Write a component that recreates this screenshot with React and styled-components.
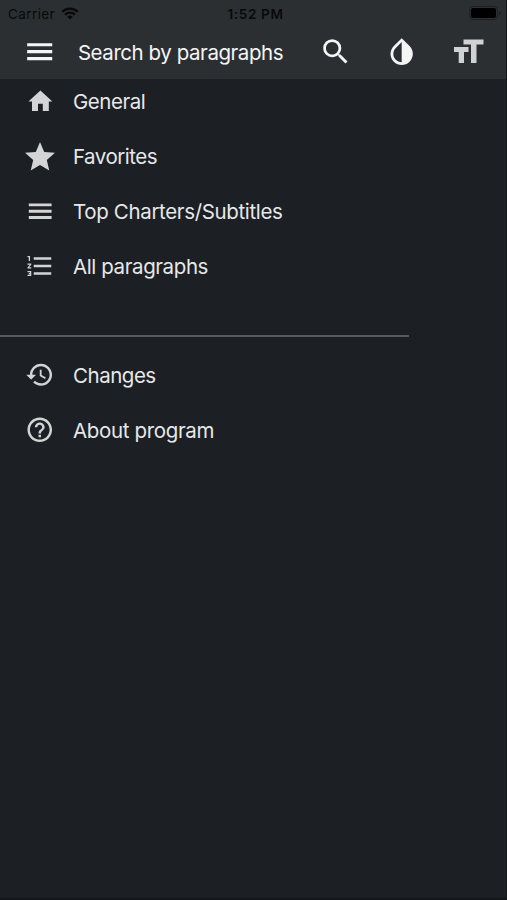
import React from 'react';
import styled, { createGlobalStyle } from 'styled-components';

const GlobalStyle = createGlobalStyle`
  * { box-sizing: border-box; }
  body { margin: 0; background: #1c1f23; }
`;

const Screen = styled.div`
  display: flex;
  flex-direction: column;
  width: 507px;
  height: 900px;
  overflow: hidden;
  background: #1c1f23;
  border-right: 1px solid #14171a;
  border-bottom: 2px solid #14171a;
  font-family: Inter, 'Liberation Sans', sans-serif;
  color: #e6e8ea;
`;

const Header = styled.header`
  height: 79px;
  flex: none;
  margin-right: -1px;
  background: #2c2f32;
`;

const StatusBar = styled.div`
  display: grid;
  grid-template-columns: 1fr auto 1fr;
  align-items: center;
  height: 27px;
  padding: 0 5px 0 8px;
  color: #08090a;
  font-size: 13.5px;
`;

const Carrier = styled.div`
  display: flex;
  align-items: center;
  gap: 6px;
  letter-spacing: 0.4px;
`;

const Clock = styled.div`
  font-weight: 600;
  letter-spacing: 0.65px;
  margin-left: 1px;
`;

const Battery = styled.svg`
  display: block;
  justify-self: end;
`;

const Toolbar = styled.div`
  display: flex;
  align-items: center;
  height: 52px;
  padding: 0 20px 2px 23px;
  color: #f4f5f5;
`;

const Title = styled.h1`
  flex: 1;
  margin: 0 0 0 21.5px;
  padding-top: 1px;
  font-size: 20.5px;
  font-weight: 400;
  line-height: 26px;
  white-space: nowrap;
  letter-spacing: ${(p) => p.$spacing}px;
`;

const Actions = styled.div`
  display: flex;
  align-items: center;
  gap: 32.7px;
`;

const Icon = styled.svg`
  display: block;
  flex: none;
  width: ${(p) => p.$size}px;
  height: ${(p) => p.$size}px;
  fill: ${(p) => p.$color || 'currentColor'};
`;

const Menu = styled.nav`
  width: 409px;
  margin-top: -5px;
  display: flex;
  flex-direction: column;
`;

const Group = styled.div`
  display: flex;
  flex-direction: column;
  padding: ${(p) => p.$pad};
`;

const Item = styled.div`
  display: flex;
  align-items: center;
  height: 55px;
`;

const IconSlot = styled.div`
  display: flex;
  justify-content: center;
  width: 80px;
  margin-right: -7px;
  padding-bottom: ${(p) => p.$lift}px;
`;

const Label = styled.span`
  font-size: 20.5px;
  line-height: 26px;
  white-space: nowrap;
  letter-spacing: ${(p) => p.$spacing}px;
`;

const Divider = styled.hr`
  width: 100%;
  height: 2px;
  margin: 0;
  border: 0;
  background: #58595c;
`;

const paths = {
  menu: 'M3 18.15h18v-2.3H3v2.3zm0-5h18v-2.3H3v2.3zm0-7.3v2.3h18v-2.3H3z',
  search:
    'M15.5 14h-.79l-.28-.27A6.471 6.471 0 0 0 16 9.5 6.5 6.5 0 1 0 9.5 16c1.61 0 3.09-.59 4.23-1.57l.27.28v.79l5 4.99L20.49 19l-4.99-5zm-6 0C7.01 14 5 11.99 5 9.5S7.01 5 9.5 5 14 7.01 14 9.5 11.99 14 9.5 14z',
  contrast:
    'M17.66 7.93L12 2.27 6.34 7.93c-3.12 3.12-3.12 8.19 0 11.31C7.9 20.8 9.95 21.58 12 21.58s4.1-.78 5.66-2.34c3.12-3.12 3.12-8.19 0-11.31zM12 19.59c-1.6 0-3.11-.62-4.24-1.76C6.62 16.69 6 15.19 6 13.59s.62-3.11 1.76-4.24L12 5.1v14.49z',
  home: 'M10 20v-6h4v6h5v-8h3L12 3 2 12h3v8z',
  star: 'M12 17.27L18.18 21l-1.64-7.03L22 9.24l-7.19-.61L12 2 9.19 8.63 2 9.24l5.46 4.73L5.82 21z',
  numbered:
    'M2 17h2v.5H3v1h1v.5H2v1h3v-4H2v1zm1-9h1V4H2v1h1v3zm-1 3h1.8L2 13.1v.9h3v-1H3.2L5 10.9V10H2v1zm5-6v2h14V5H7zm0 14h14v-2H7v2zm0-6h14v-2H7v2z',
  history:
    'M13 3c-4.97 0-9 4.03-9 9H1l3.89 3.89.07.14L9 12H6c0-3.87 3.13-7 7-7s7 3.13 7 7-3.13 7-7 7c-1.93 0-3.68-.79-4.94-2.06l-1.42 1.42C8.27 19.99 10.51 21 13 21c4.97 0 9-4.03 9-9s-4.03-9-9-9zm-1 5v5l4.28 2.54.72-1.21-3.5-2.08V8H12z',
  help: 'M11 18h2v-2h-2v2zm1-16C6.48 2 2 6.48 2 12s4.48 10 10 10 10-4.48 10-10S17.52 2 12 2zm0 18c-4.41 0-8-3.59-8-8s3.59-8 8-8 8 3.59 8 8-3.59 8-8 8zm0-14c-2.21 0-4 1.79-4 4h2c0-1.1.9-2 2-2s2 .9 2 2c0 2-3 1.75-3 5h2c0-2.25 3-2.5 3-5 0-2.21-1.79-4-4-4z',
};

const mainItems = [
  { icon: 'home', label: 'General', size: 28.8, spacing: -0.45, lift: 0 },
  { icon: 'star', label: 'Favorites', size: 36, spacing: -0.5, lift: 0 },
  { icon: 'menu', label: 'Top Charters/Subtitles', size: 30.4, spacing: -0.35, lift: 1 },
  { icon: 'numbered', label: 'All paragraphs', size: 30, spacing: -0.4, lift: 0.5 },
];

const infoItems = [
  { icon: 'history', label: 'Changes', size: 29.5, spacing: -0.48, lift: 1 },
  { icon: 'help', label: 'About program', size: 29.5, spacing: -0.35, lift: 2 },
];

function Glyph({ name, size, color }) {
  return (
    <Icon viewBox="0 0 24 24" $size={size} $color={color}>
      <path d={paths[name]} />
    </Icon>
  );
}

function MenuItem({ icon, label, size, spacing, lift }) {
  return (
    <Item>
      <IconSlot $lift={lift}>
        <Glyph name={icon} size={size} color="#d2d4d5" />
      </IconSlot>
      <Label $spacing={spacing}>{label}</Label>
    </Item>
  );
}

export default function App() {
  return (
    <Screen>
      <GlobalStyle />
      <Header>
        <StatusBar>
          <Carrier>
            Carrier
            <svg width="18" height="13" viewBox="0 0 18 13" fill="none" stroke="#08090a" strokeWidth="2.3">
              <path d="M1.2 4.8A11 11 0 0 1 16.8 4.8" />
              <path d="M4 7.7A7 7 0 0 1 14 7.7" />
              <path d="M6.3 9.7A4 4 0 0 1 11.7 9.7L9 12.4Z" fill="#08090a" stroke="none" />
            </svg>
          </Carrier>
          <Clock>1:52 PM</Clock>
          <Battery width="33" height="15" viewBox="0 0 33 15">
            <rect x="0.5" y="0.5" width="28" height="13" rx="3.5" fill="none" stroke="#1d2022" />
            <rect x="2" y="2" width="25" height="10" rx="2" fill="#000" />
            <path d="M30 5v4.5q1.8-.7 1.8-2.25T30 5Z" fill="#1d2022" />
          </Battery>
        </StatusBar>
        <Toolbar>
          <Glyph name="menu" size={33.4} />
          <Title $spacing={-0.44}>Search by paragraphs</Title>
          <Actions>
            <Glyph name="search" size={33.4} />
            <Glyph name="contrast" size={33.4} />
            <Icon viewBox="0 0 36 36" $size={36} $color="#d0d2d3">
              <path d="M12.5 5.5H32.5V10.5H25.5V29H20V10.5H12.5ZM3 13H17.5V18H13V29H7.7V18H3Z" />
            </Icon>
          </Actions>
        </Toolbar>
      </Header>
      <Menu>
        <Group $pad="0 0 41px">
          {mainItems.map((item) => (
            <MenuItem key={item.label} {...item} />
          ))}
        </Group>
        <Divider />
        <Group $pad="11px 0 0">
          {infoItems.map((item) => (
            <MenuItem key={item.label} {...item} />
          ))}
        </Group>
      </Menu>
    </Screen>
  );
}
